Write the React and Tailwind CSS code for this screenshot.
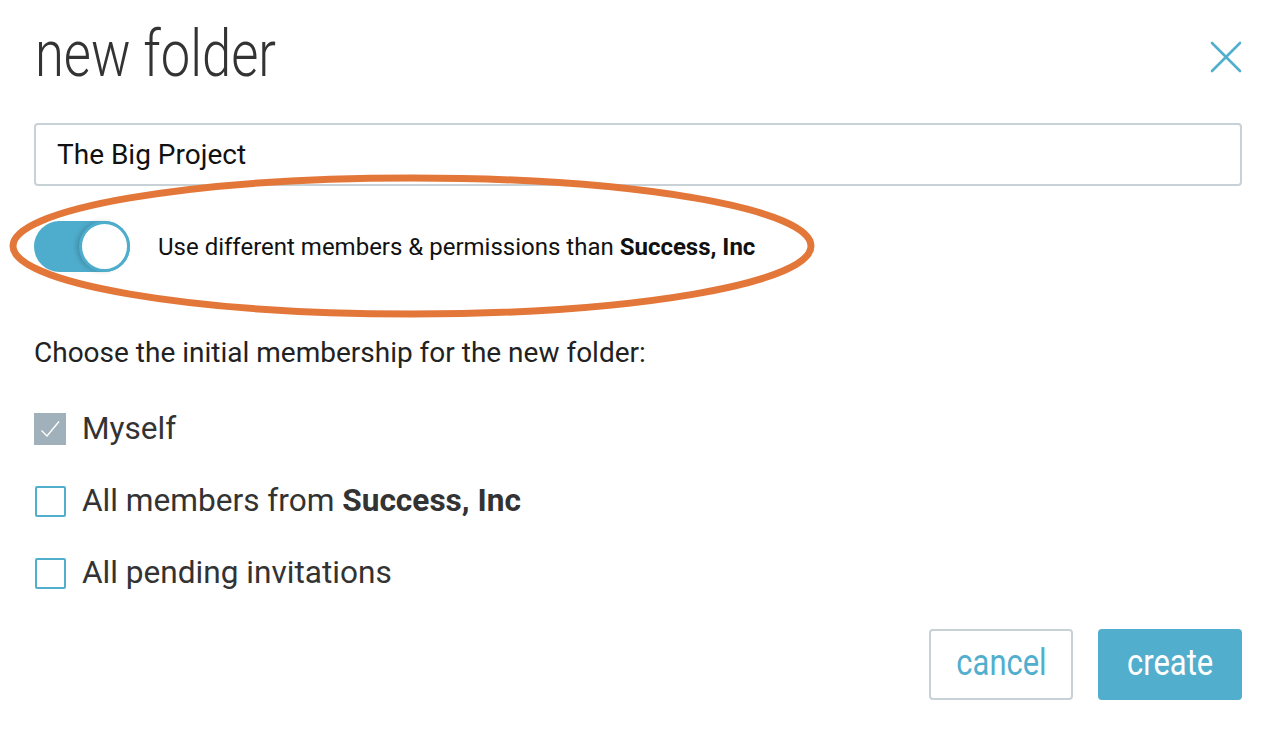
import React from 'react';

const Check = () => (
  <svg viewBox="0 0 32 32" className="w-8 h-8">
    <rect width="32" height="32" fill="#a0b1bc" />
    <path d="M7.5 17.5l5.5 5.5L25 8.5" fill="none" stroke="#fff" strokeWidth="1.4" />
  </svg>
);

function Row({ checked, children }) {
  return (
    <div className="flex items-center h-[72px]">
      <div className="w-8 h-8 flex items-center justify-center">
        {checked ? (
          <Check />
        ) : (
          <div className="w-[31px] h-[31px] border-2 border-[#52aecd] rounded-[2px] bg-white" />
        )}
      </div>
      <span className="ml-[16px] text-[31.6px] leading-[40px] text-[#333]">{children}</span>
    </div>
  );
}

export default function App() {
  return (
    <div className="relative w-[1276px] h-[732px] bg-white px-[34px] font-['Roboto',sans-serif] overflow-hidden">
      {/* Header */}
      <div className="flex items-start justify-between pt-[23px]">
        <h1 className="h-[64px] text-[64px] font-light text-[#333] ml-[1px] origin-left scale-x-[0.82] leading-none whitespace-nowrap">
          new folder
        </h1>
        <svg viewBox="0 0 32 32" className="w-[32px] h-[32px] mt-[18px]">
          <path d="M2 2l28 28M30 2L2 30" stroke="#52aecd" strokeWidth="2.6" strokeLinecap="round" />
        </svg>
      </div>

      {/* Name input */}
      <div className="mt-[36px] h-[63px] border-2 border-[#c8d1d6] rounded-[4px] flex items-center px-[21px] text-[28px] text-[#111]">
        The Big Project
      </div>

      {/* Toggle */}
      <div className="flex items-center mt-[35px] h-[51px]">
        <div className="relative w-[96px] h-[51px] rounded-full bg-[#4eadcc] shrink-0">
          <div className="absolute right-0 top-0 w-[51px] h-[51px] rounded-full bg-white border-[3px] border-[#4eadcc] shadow-[-3px_0_4px_rgba(0,0,0,0.15)]" />
        </div>
        <span className="ml-[28px] text-[24px] text-[#111] whitespace-nowrap">
          Use different members &amp; permissions than <b className="font-bold">Success, Inc</b>
        </span>
      </div>

      {/* Annotation ellipse */}
      <svg className="absolute left-[8px] top-[172px] pointer-events-none" width="808" height="148" viewBox="0 0 808 148">
        <ellipse cx="404" cy="74" rx="399" ry="68" fill="none" stroke="#e3773a" strokeWidth="7" />
      </svg>

      <p className="mt-[65px] text-[28px] leading-[32px] text-[#222]">Choose the initial membership for the new folder:</p>

      <div className="mt-[24px]">
        <Row checked>Myself</Row>
        <Row>
          All members from <b className="font-bold">Success, Inc</b>
        </Row>
        <Row>All pending invitations</Row>
      </div>

      <div className="flex justify-end gap-[25px] mt-[20px]">
        <button className="w-[144px] h-[71px] border-2 border-[#c8d1d6] rounded-[4px] bg-white text-[#52aecd] text-[36px] leading-[40px] pb-[4px]">
          <span className="inline-block scale-x-[0.86]">cancel</span>
        </button>
        <button className="w-[144px] h-[71px] rounded-[4px] bg-[#52aecd] text-white text-[36px] leading-[40px] pb-[4px]">
          <span className="inline-block scale-x-[0.86]">create</span>
        </button>
      </div>
    </div>
  );
}
